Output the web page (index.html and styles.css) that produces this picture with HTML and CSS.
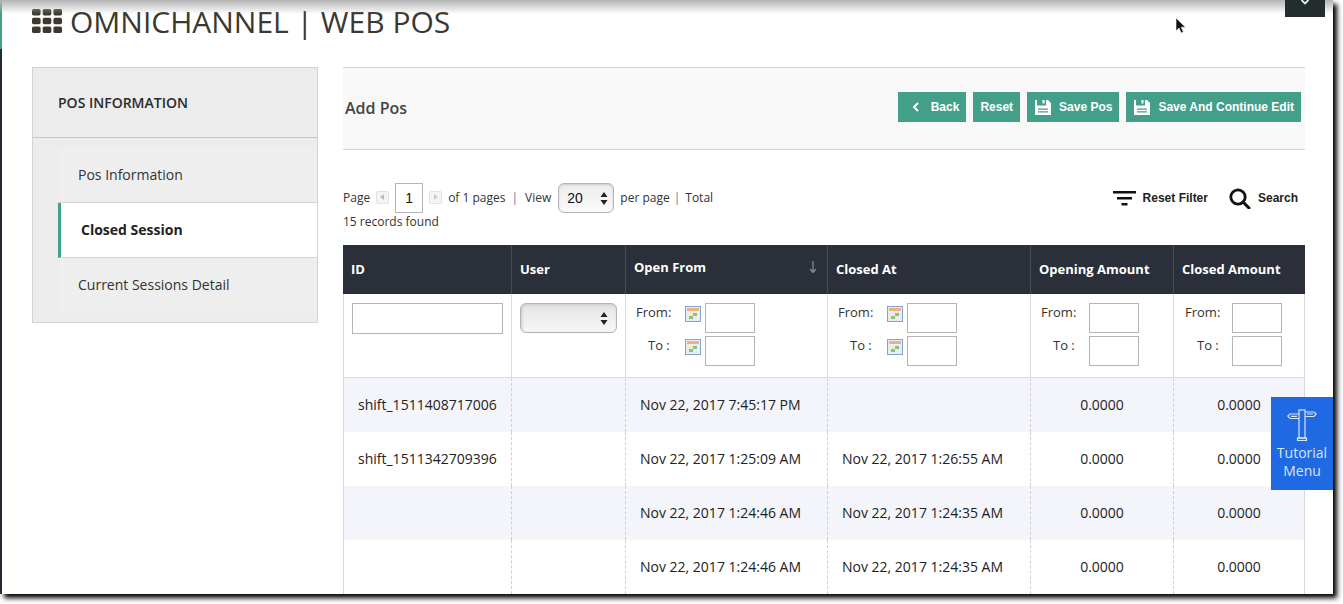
FILE: index.html
```html
<!DOCTYPE html>
<html lang="en">
<head>
<meta charset="utf-8">
<title>Omnichannel | Web POS</title>
<link rel="stylesheet" href="styles.css">
</head>
<body>
<div class="window">
  <div class="rail"><div class="rail-top"></div></div>
  <div class="page">
    <header class="title">
      <svg class="grid-icon" width="30" height="24" viewBox="0 0 30 24"><g fill="#3c3a30"><rect x="0" y="0" width="8.6" height="6.4" rx="1.6"/><rect x="10.7" y="0" width="8.6" height="6.4" rx="1.6"/><rect x="21.4" y="0" width="8.6" height="6.4" rx="1.6"/><rect x="0" y="8.8" width="8.6" height="6.4" rx="1.6"/><rect x="10.7" y="8.8" width="8.6" height="6.4" rx="1.6"/><rect x="21.4" y="8.8" width="8.6" height="6.4" rx="1.6"/><rect x="0" y="17.6" width="8.6" height="6.4" rx="1.6"/><rect x="10.7" y="17.6" width="8.6" height="6.4" rx="1.6"/><rect x="21.4" y="17.6" width="8.6" height="6.4" rx="1.6"/></g></svg>
      <h1>OMNICHANNEL | WEB POS</h1>
    </header>
    <div class="columns">
      <aside class="side">
        <div class="side-head">POS INFORMATION</div>
        <nav class="side-nav">
          <a class="side-item first">Pos Information</a>
          <a class="side-item active">Closed Session</a>
          <a class="side-item last">Current Sessions Detail</a>
        </nav>
      </aside>
      <main class="content">
        <div class="bar">
          <h2>Add Pos</h2>
          <div class="actions">
            <button class="btn btn-back"><svg width="8" height="10" viewBox="0 0 8 10"><path d="M6 1L2 5l4 4" fill="none" stroke="#fff" stroke-width="2"/></svg>Back</button>
            <button class="btn btn-plain">Reset</button>
            <button class="btn"><svg width="16" height="17" viewBox="0 0 16 17"><path fill="#fff" d="M0 1h2v5.500h9V1h2l3 3v12H0z"/><path fill="#fff" d="M7.500 1h2v3.500h-2z"/><path fill="#449f8a" d="M3 9.500h10v1.200H3zM3 12.200h10v1.200H3z"/></svg>Save Pos</button>
            <button class="btn"><svg width="16" height="17" viewBox="0 0 16 17"><path fill="#fff" d="M0 1h2v5.500h9V1h2l3 3v12H0z"/><path fill="#fff" d="M7.500 1h2v3.500h-2z"/><path fill="#449f8a" d="M3 9.500h10v1.200H3zM3 12.200h10v1.200H3z"/></svg>Save And Continue Edit</button>
          </div>
        </div>
        <div class="tools">
          <div class="pager">
            <div class="pager-line">
              <span>Page</span>
              <span class="step"><svg width="5" height="6" viewBox="0 0 5 6"><path d="M4 0v6L0 3z" fill="#bbb"/></svg></span>
              <input class="page-input" value="1">
              <span class="step"><svg width="5" height="6" viewBox="0 0 5 6"><path d="M1 0v6l4-3z" fill="#ccc"/></svg></span>
              <span>of 1 pages</span><span class="sep">|</span><span>View</span>
              <div class="select view-select"><span>20</span><svg width="8" height="13" viewBox="0 0 8 13"><path d="M4 0l3.500 5H.5zM4 13L.5 8h7z" fill="#222"/></svg></div>
              <span>per page</span><span class="sep sep-tight">|</span><span>Total</span>
            </div>
            <div class="records">15 records found</div>
          </div>
          <div class="tool-links">
            <a class="tool-link"><svg width="23" height="15" viewBox="0 0 23 15"><path fill="#111" d="M0 0h23v2.500H0zM4 6h15v2.500H4zM8.500 12h6v2.500h-6z"/></svg>Reset Filter</a>
            <a class="tool-link"><svg width="22" height="21" viewBox="0 0 22 21"><circle cx="9" cy="9" r="7.200" fill="none" stroke="#111" stroke-width="2.800"/><path d="M14 14l6 6" stroke="#111" stroke-width="3" stroke-linecap="round"/></svg>Search</a>
          </div>
        </div>
        <table class="grid">
          <colgroup><col class="c1"><col class="c2"><col class="c3"><col class="c4"><col class="c5"><col class="c6"></colgroup>
          <thead>
            <tr class="heads">
              <th>ID</th><th>User</th>
              <th class="sorted"><div class="sort-wrap"><span>Open From</span><svg width="8" height="12" viewBox="0 0 8 12"><path d="M4 0v11M1 8l3 3.500L7 8" fill="none" stroke="#8a8d95" stroke-width="1.200"/></svg></div></th>
              <th>Closed At</th><th>Opening Amount</th><th>Closed Amount</th>
            </tr>
            <tr class="filters">
              <td><input class="f-text"></td>
              <td><div class="select f-select"><svg width="8" height="13" viewBox="0 0 8 13"><path d="M4 0l3.500 5H.5zM4 13L.5 8h7z" fill="#222"/></svg></div></td>
              <td>
                <div class="range">
                  <label class="from">From:</label><svg class="cal" width="16" height="16" viewBox="0 0 16 16"><rect x=".5" y=".5" width="15" height="15" fill="#e6eef8" stroke="#7ea3da"/><rect x="2" y="2" width="12" height="3" fill="#f3b07a"/><rect x="3" y="6" width="10" height="8" fill="#f1ecdd"/><rect x="8" y="7" width="4" height="3" fill="#86c486"/><rect x="4" y="10" width="4" height="3" fill="#86c486"/></svg><input class="f-date">
                  <label class="to">To :</label><svg class="cal" width="16" height="16" viewBox="0 0 16 16"><rect x=".5" y=".5" width="15" height="15" fill="#e6eef8" stroke="#7ea3da"/><rect x="2" y="2" width="12" height="3" fill="#f3b07a"/><rect x="3" y="6" width="10" height="8" fill="#f1ecdd"/><rect x="8" y="7" width="4" height="3" fill="#86c486"/><rect x="4" y="10" width="4" height="3" fill="#86c486"/></svg><input class="f-date">
                </div>
              </td>
              <td>
                <div class="range">
                  <label class="from">From:</label><svg class="cal" width="16" height="16" viewBox="0 0 16 16"><rect x=".5" y=".5" width="15" height="15" fill="#e6eef8" stroke="#7ea3da"/><rect x="2" y="2" width="12" height="3" fill="#f3b07a"/><rect x="3" y="6" width="10" height="8" fill="#f1ecdd"/><rect x="8" y="7" width="4" height="3" fill="#86c486"/><rect x="4" y="10" width="4" height="3" fill="#86c486"/></svg><input class="f-date">
                  <label class="to">To :</label><svg class="cal" width="16" height="16" viewBox="0 0 16 16"><rect x=".5" y=".5" width="15" height="15" fill="#e6eef8" stroke="#7ea3da"/><rect x="2" y="2" width="12" height="3" fill="#f3b07a"/><rect x="3" y="6" width="10" height="8" fill="#f1ecdd"/><rect x="8" y="7" width="4" height="3" fill="#86c486"/><rect x="4" y="10" width="4" height="3" fill="#86c486"/></svg><input class="f-date">
                </div>
              </td>
              <td>
                <div class="range range-plain">
                  <label class="from">From:</label><input class="f-date">
                  <label class="to">To :</label><input class="f-date">
                </div>
              </td>
              <td>
                <div class="range range-plain range-narrow">
                  <label class="from">From:</label><input class="f-date">
                  <label class="to">To :</label><input class="f-date">
                </div>
              </td>
            </tr>
          </thead>
          <tbody>
            <tr class="alt"><td>shift_1511408717006</td><td></td><td>Nov 22, 2017 7:45:17 PM</td><td></td><td class="num">0.0000</td><td class="num">0.0000</td></tr>
            <tr><td>shift_1511342709396</td><td></td><td>Nov 22, 2017 1:25:09 AM</td><td>Nov 22, 2017 1:26:55 AM</td><td class="num">0.0000</td><td class="num">0.0000</td></tr>
            <tr class="alt"><td></td><td></td><td>Nov 22, 2017 1:24:46 AM</td><td>Nov 22, 2017 1:24:35 AM</td><td class="num">0.0000</td><td class="num">0.0000</td></tr>
            <tr><td></td><td></td><td>Nov 22, 2017 1:24:46 AM</td><td>Nov 22, 2017 1:24:35 AM</td><td class="num">0.0000</td><td class="num">0.0000</td></tr>
          </tbody>
        </table>
      </main>
    </div>
  </div>
  <div class="top-shade"></div>
  <div class="corner-tab"><svg width="10" height="6" viewBox="0 0 10 6"><path d="M1.500 0L5 3.500 8.500 0" fill="none" stroke="#e8eaea" stroke-width="1.800"/></svg></div>
  <svg class="cursor" width="12" height="18" viewBox="0 0 12 18"><path d="M1 1v13l3-3 2.200 5 2.200-1-2.200-4.800H10.500z" fill="#111" stroke="#fff" stroke-width=".6"/></svg>
  <a class="tutorial">
    <svg width="30" height="32" viewBox="0 0 30 32"><g fill="none" stroke="#d6e4fb" stroke-width="1.200"><rect x="12" y="1" width="6" height="28"/><rect x="10.500" y="29" width="9" height="2.500"/><path d="M12 5H3L.8 7 3 9.500h9M18 3h9l2.200 2L27 7.500h-9"/><path d="M4 7.300h6M20 5h6"/></g></svg>
    <span>Tutorial Menu</span>
  </a>
</div>
</body>
</html>
```

FILE: styles.css
```css
* { box-sizing: border-box; }
html, body { margin: 0; padding: 0; height: 604px; overflow: hidden; background: #fff; }
body { font-family: "Open Sans", sans-serif; color: #2d2d2d; }

.window {
  position: relative;
  display: flex;
  width: 1333px;
  height: 594px;
  overflow: hidden;
  background: #fff;
  box-shadow: 4px 4px 5px 0 #000;
}

.rail { flex: 0 0 2px; background: #242a36; }
.rail-top { height: 49px; background: #449f8a; }

.page { flex: 1; padding-left: 30px; min-width: 0; }

.title { display: flex; align-items: center; height: 67px; padding-bottom: 25px; }
.grid-icon { margin-right: 8px; flex: none; }
.title h1 { margin: 0; font-size: 30px; font-weight: 400; color: #3a382f; white-space: nowrap; }

.columns { display: flex; align-items: flex-start; }

.side {
  flex: 0 0 286px;
  height: 256px;
  background: #ececec;
  border: 1px solid #d4d4d8;
  margin-right: 25px;
}
.side-head {
  height: 70px;
  padding: 0 0 0 25px;
  display: flex;
  align-items: center;
  border-bottom: 1px solid #c6c6c8;
  font-size: 14px;
  font-weight: 600;
  color: #2b2b2b;
}
.side-nav { padding: 9px 0 0 25px; }
.side-item {
  display: flex;
  align-items: center;
  height: 55px;
  padding-left: 20px;
  font-size: 14px;
  color: #333;
  background: #eee;
  border-bottom: 1px solid #d4d4dc;
}
.side-item.first { height: 56px; }
.side-item.active {
  padding-bottom: 2px;
  background: #fff;
  border-left: 3px solid #449f8a;
  font-weight: 700;
  color: #222;
}
.side-item.last { border-bottom: 0; height: 54px; padding-bottom: 1px; }

.content { width: 962px; flex: none; }

.bar {
  display: flex;
  align-items: center;
  justify-content: space-between;
  height: 83px;
  padding: 0 4px 2px 2px;
  background: #f8f8f8;
  border-top: 1px solid #d5d5d5;
  border-bottom: 1px solid #d5d5d5;
}
.bar h2 { margin: 0; font-size: 16px; font-weight: 600; color: #444; }
.actions { display: flex; gap: 7px; margin-bottom: 1px; }
.btn {
  display: flex;
  align-items: center;
  gap: 8px;
  height: 30px;
  padding: 0 7px 0 8px;
  border: 0;
  background: #449f8a;
  color: #fff;
  font-family: "Liberation Sans", sans-serif;
  font-size: 12px;
  font-weight: 700;
}
.btn-back { padding-left: 14px; gap: 11px; }
.btn-plain { padding-left: 7px; }

.tools {
  display: flex;
  justify-content: space-between;
  align-items: flex-start;
  height: 95px;
  padding: 33px 7px 0 0;
}
.pager { font-size: 12px; color: #333; }
.pager-line { display: flex; align-items: center; height: 30px; white-space: nowrap; }
.pager-line > span { margin-bottom: 2px; }
.step {
  display: flex;
  align-items: center;
  justify-content: center;
  width: 13px;
  height: 13px;
  margin: 0 6px;
  border: 1px solid #e2e2e2;
  background: #f4f4f4;
  border-radius: 2px;
}
.page-input {
  width: 28px;
  height: 30px;
  padding: 0;
  border: 1px solid #b4b4ba;
  text-align: center;
  font-family: "Liberation Sans", sans-serif;
  font-size: 14px;
  color: #111;
  background: #fff;
  outline: 0;
}
.sep { margin: 0 7px 2px 6px; color: #6a7a90; }
.sep-tight { margin: 0 5px 2px 4px; }
.select {
  display: flex;
  align-items: center;
  justify-content: space-between;
  border: 1px solid #b4b4ba;
  border-radius: 6px;
  background: linear-gradient(#ececec, #fafafa);
  box-shadow: inset 0 1px 2px #ccc;
}
.view-select {
  width: 56px;
  height: 30px;
  padding: 0 5px 0 8px;
  margin: 0 6px 0 7px;
  font-family: "Liberation Sans", sans-serif;
  font-size: 14px;
  color: #111;
}
.records { line-height: 18px; }
.tool-links { display: flex; gap: 21px; height: 30px; align-items: center; }
.tool-link {
  display: flex;
  align-items: center;
  gap: 7px;
  font-family: "Liberation Sans", sans-serif;
  font-size: 12px;
  font-weight: 700;
  color: #222;
}

.grid { width: 962px; table-layout: fixed; border-collapse: separate; border-spacing: 0; font-size: 14px; color: #222; }
.c1 { width: 169px; }
.c2 { width: 114px; }
.c3 { width: 202px; }
.c4 { width: 203px; }
.c5 { width: 143px; }
.c6 { width: 131px; }

.heads th {
  height: 49px;
  padding: 0 8px 2px;
  background: #2a2f3a;
  border-right: 1px solid #454a55;
  color: #fff;
  font-size: 13px;
  font-weight: 700;
  text-align: left;
  white-space: nowrap;
}
.heads th:last-child { border-right: 0; }
.sort-wrap { display: flex; justify-content: space-between; align-items: center; padding: 0 2px 4px 0; }

.filters td {
  height: 84px;
  padding: 9px 8px 0;
  vertical-align: top;
  border-right: 1px solid #dcdce0;
  border-bottom: 1px solid #dcdce0;
  font-size: 13px;
}
.filters td:first-child { border-left: 1px solid #d5d8e0; }
.filters td:last-child { border-right: 1px solid #d5d8e0; }
.f-text { display: block; width: 151px; height: 31px; border: 1px solid #b4b4ba; background: #fff; }
.f-select { width: 97px; height: 30px; padding-right: 8px; justify-content: flex-end; background: linear-gradient(#e4e4e6, #f8f8f8); box-shadow: inset 1px 1px 3px #c8c8c8; }
.range {
  display: grid;
  grid-template-columns: 49px 20px 50px;
  grid-auto-rows: 30px;
  row-gap: 3px;
  align-items: center;
  margin-left: 2px;
}
.range label { color: #333; align-self: start; line-height: 18px; }
.range .to { padding-left: 12px; }
.cal { display: block; align-self: start; margin-top: 3px; }
.f-date { width: 50px; height: 30px; border: 1px solid #b4b4ba; background: #fff; padding: 0; }
.range-plain { grid-template-columns: 48px 50px; }
.range-narrow { grid-template-columns: 47px 50px; margin-left: 3px; }

tbody td {
  height: 54px;
  padding: 0 14px 2px;
  border-right: 1px dashed #cfcfd4;
  white-space: nowrap;
}
tbody td:first-child { border-left: 1px solid #d5d8e0; }
tbody td:last-child { border-right: 1px solid #d5d8e0; }
tbody tr.alt td { background: #f4f5fa; }
.num { text-align: center; }

.top-shade {
  position: absolute;
  left: 0; top: 0; right: 0;
  height: 14px;
  background: linear-gradient(#b4b4b4, rgba(255,255,255,0));
  pointer-events: none;
}
.corner-tab {
  position: absolute;
  left: 1285px; top: 0;
  width: 40px;
  height: 17px;
  background: #232d2e;
  display: flex;
  justify-content: center;
}
.cursor { position: absolute; left: 1175px; top: 17px; }
.tutorial {
  position: absolute;
  left: 1271px; top: 397px;
  width: 62px;
  height: 93px;
  padding-top: 12px;
  background: #1f69e3;
  color: #d6e4fb;
  font-size: 14px;
  line-height: 18px;
  text-align: center;
  display: flex;
  flex-direction: column;
  align-items: center;
  gap: 3px;
}
```
